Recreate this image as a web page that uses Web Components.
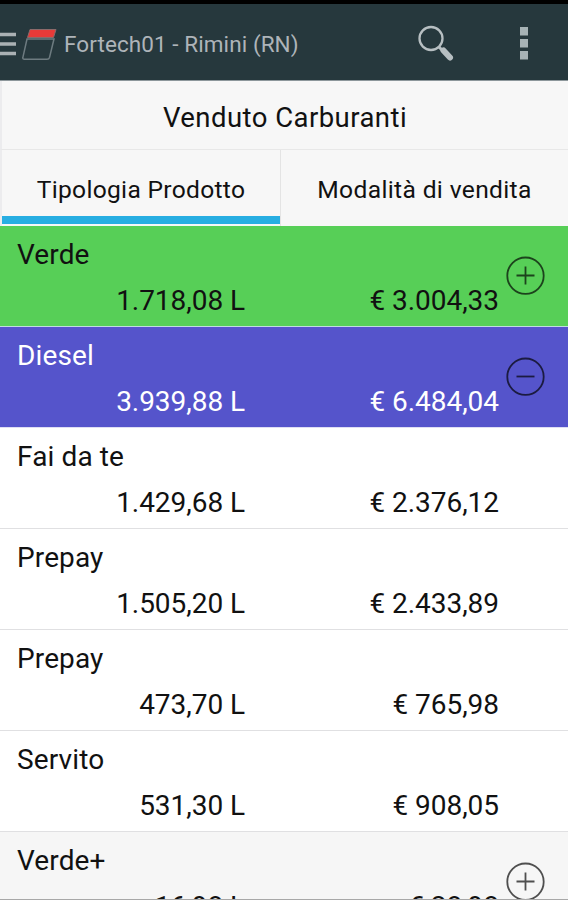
<!DOCTYPE html>
<html lang="it">
<head>
<meta charset="utf-8">
<title>Venduto Carburanti</title>
<style>
  html, body { margin: 0; height: 100%; overflow: hidden; }
  body { font-family: Roboto, "Noto Sans", sans-serif; background: #fff; color: #111; }
</style>
</head>
<body>
<sales-screen>
  <app-header slot="header">Fortech01 - Rimini (RN)</app-header>
  <page-title slot="header">Venduto Carburanti</page-title>
  <tab-bar slot="header">
    <tab-item active>Tipologia Prodotto</tab-item>
    <tab-item style="--tab-spacing: 0.35px">Modalità di vendita</tab-item>
  </tab-bar>
  <fuel-row name="Verde" litres="1.718,08" amount="3.004,33" toggle="plus" tone="green"></fuel-row>
  <fuel-row name="Diesel" litres="3.939,88" amount="6.484,04" toggle="minus" tone="blue"></fuel-row>
  <fuel-row name="Fai da te" litres="1.429,68" amount="2.376,12"></fuel-row>
  <fuel-row name="Prepay" litres="1.505,20" amount="2.433,89"></fuel-row>
  <fuel-row name="Prepay" litres="473,70" amount="765,98"></fuel-row>
  <fuel-row name="Servito" litres="531,30" amount="908,05"></fuel-row>
  <fuel-row name="Verde+" litres="16,98" amount="28,98" toggle="plus" tone="grey"></fuel-row>
</sales-screen>

<script>
(function () {
  'use strict';

  // Base class: renders static CSS + template() into an open shadow root
  class BaseElement extends HTMLElement {
    constructor() {
      super();
      this.attachShadow({ mode: 'open' });
    }
    connectedCallback() {
      this.shadowRoot.innerHTML = `<style>${this.constructor.css}</style>${this.template()}`;
    }
  }

  class SalesScreen extends BaseElement {
    static css = `
      :host {
        display: flex; flex-direction: column; box-sizing: border-box;
        width: 568px; height: 900px; overflow: hidden;
        border-bottom: 1px solid #a8a8a8;
      }
      header { flex: none; }
      main { flex: 1; min-height: 0; overflow: hidden; }
    `;
    template() {
      return '<header><slot name="header"></slot></header><main><slot></slot></main>';
    }
  }

  class AppHeader extends BaseElement {
    static css = `
      :host {
        display: flex; align-items: center; box-sizing: border-box; height: 81px;
        border-top: 4px solid #000; border-bottom: 1px solid #8d979b;
        background: #26383d; color: #aeb4b9;
      }
      svg { flex: none; display: block; }
      .title {
        flex: 1; padding-left: 7px; padding-top: 4px;
        font-size: 22.5px; line-height: 30px; white-space: nowrap; letter-spacing: 0.08px;
      }
    `;
    template() {
      return `
        <svg width="57" height="76" viewBox="0 4 57 76" fill="none">
          <path d="M0 34.5H16M0 44H16M0 53.5H16" stroke="#aab1b4" stroke-width="3.6"/>
          <path d="M30 29.5H56L53.5 37.5H27.5Z" fill="#e83a38" stroke="#8c6a6a" stroke-width="1"/>
          <path d="M27 39H54L49.5 57.5Q49 59.3 47 59.3H24.5Q22.4 59.3 22.9 57.3Z" stroke="#6d7b80" stroke-width="1.5"/>
        </svg>
        <div class="title"><slot></slot></div>
        <svg width="155" height="76" viewBox="413 4 155 76" fill="none">
          <circle cx="431" cy="38.500" r="11.5" stroke="#b7bfc2" stroke-width="2.3"/>
          <path d="M438.5 46.5L443 51" stroke="#b7bfc2" stroke-width="3"/>
          <path d="M443.500 50.500L450 57.500" stroke="#b7bfc2" stroke-width="6" stroke-linecap="round"/>
          <path d="M520 27h8v8.500h-8zM520 39h8v8.500h-8zM520 51h8v8.500h-8z" fill="#a7b3b6"/>
        </svg>`;
    }
  }

  class PageTitle extends BaseElement {
    static css = `
      :host {
        display: flex; align-items: center; justify-content: center; box-sizing: border-box;
        height: 69px; padding-top: 5px;
        border-left: 2px solid #ececee; border-bottom: 1px solid #e8e8e8;
        background: #f7f7f7; font-size: 27.5px; line-height: 36px; letter-spacing: 0.45px;
      }
    `;
    template() { return '<span><slot></slot></span>'; }
  }

  class TabBar extends BaseElement {
    static css = `
      :host {
        display: grid; grid-template-columns: 278px 1fr; column-gap: 1px; box-sizing: border-box;
        height: 76px; border-left: 2px solid #ececee; background: #e4e4e4;
      }
    `;
    template() { return '<slot></slot>'; }
  }

  class TabItem extends BaseElement {
    static css = `
      :host {
        display: flex; flex-direction: column; background: #f7f7f7;
        font-size: 24.6px; letter-spacing: var(--tab-spacing, 0.3px);
      }
      .label { flex: 1; display: flex; align-items: center; justify-content: center; padding-top: 12px; white-space: nowrap; }
      .bar { height: 8px; margin-bottom: 2px; }
      :host([active]) .bar { background: #28aee2; }
    `;
    template() {
      return '<div class="label"><span><slot></slot></span></div><div class="bar"></div>';
    }
  }

  // Circled plus / minus
  class ToggleIcon extends BaseElement {
    static css = `
      :host { display: block; width: 40px; height: 40px; }
      svg { display: block; }
    `;
    template() {
      const vertical = this.getAttribute('kind') === 'plus' ? 'M19.5 10.5v18' : '';
      return `
        <svg width="40" height="40" fill="none" stroke="#000" stroke-opacity="0.68">
          <circle cx="19.500" cy="19.700" r="18.200" stroke-width="1.8"/>
          <path d="M10.5 19.500h18${vertical}" stroke-width="1.8"/>
        </svg>`;
    }
  }

  class FuelRow extends BaseElement {
    static css = `
      :host {
        display: grid; grid-template-columns: 245px 254px 1fr; grid-template-rows: 50px 50px;
        box-sizing: border-box; height: 101px; border-bottom: 1px solid #e0e0e2;
        font-size: 28px; line-height: 32px; white-space: nowrap;
      }
      :host([tone="green"]) { background: #57cf57; border-color: #c0dce0; }
      :host([tone="blue"]) { background: #5554cb; border-color: #dedef4; color: #fff; }
      :host([tone="grey"]) { background: #f6f6f6; }
      .name { grid-area: 1 / 1 / 2 / 3; padding: 13px 0 0 17px; letter-spacing: 0.12px; }
      .value { grid-row: 2; padding-top: 9px; text-align: right; letter-spacing: -0.05px; }
      .toggle { grid-area: 1 / 3 / 3 / 4; padding: 30px 0 0 7px; }
    `;
    template() {
      const toggle = this.getAttribute('toggle');
      return `
        <div class="name">${this.getAttribute('name')}</div>
        <div class="value">${this.getAttribute('litres')} L</div>
        <div class="value">€ ${this.getAttribute('amount')}</div>
        ${toggle ? `<div class="toggle"><toggle-icon kind="${toggle}"></toggle-icon></div>` : ''}`;
    }
  }

  customElements.define('sales-screen', SalesScreen);
  customElements.define('app-header', AppHeader);
  customElements.define('page-title', PageTitle);
  customElements.define('tab-bar', TabBar);
  customElements.define('tab-item', TabItem);
  customElements.define('toggle-icon', ToggleIcon);
  customElements.define('fuel-row', FuelRow);
})();
</script>
</body>
</html>
